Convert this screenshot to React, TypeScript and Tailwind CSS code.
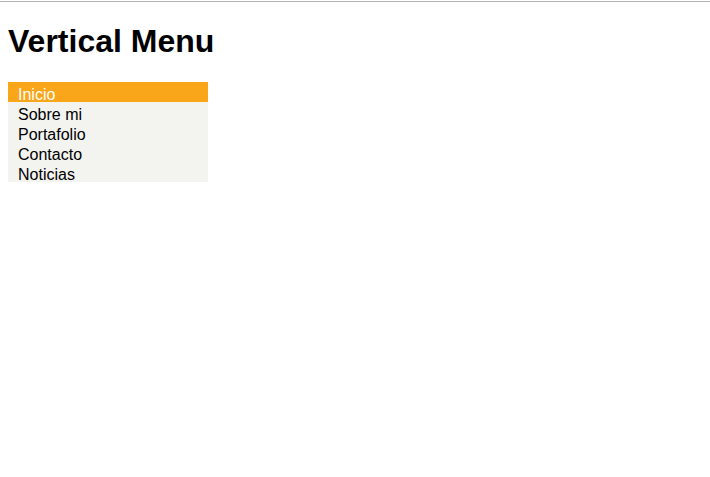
const items = ["Inicio", "Sobre mi", "Portafolio", "Contacto", "Noticias"];

export default function App() {
  return (
    <div className="min-h-[477px] bg-white font-['Liberation_Sans',Arial,sans-serif] text-black">
      <div className="pt-px">
        <div className="h-px bg-[#b4b4b4]" />
      </div>
      <div className="px-2">
        <h1 className="mt-[21px] mb-[22px] text-[32px] leading-[37px] font-bold">Vertical Menu</h1>
        <ul className="w-[200px] bg-[#f3f3f0]">
          {items.map((item, i) => (
            <li
              key={item}
              className={`h-5 pt-[3px] pl-[10px] text-base leading-5 ${i === 0 ? "bg-[#faa61a] text-white" : ""}`}
            >
              {item}
            </li>
          ))}
        </ul>
      </div>
    </div>
  );
}
